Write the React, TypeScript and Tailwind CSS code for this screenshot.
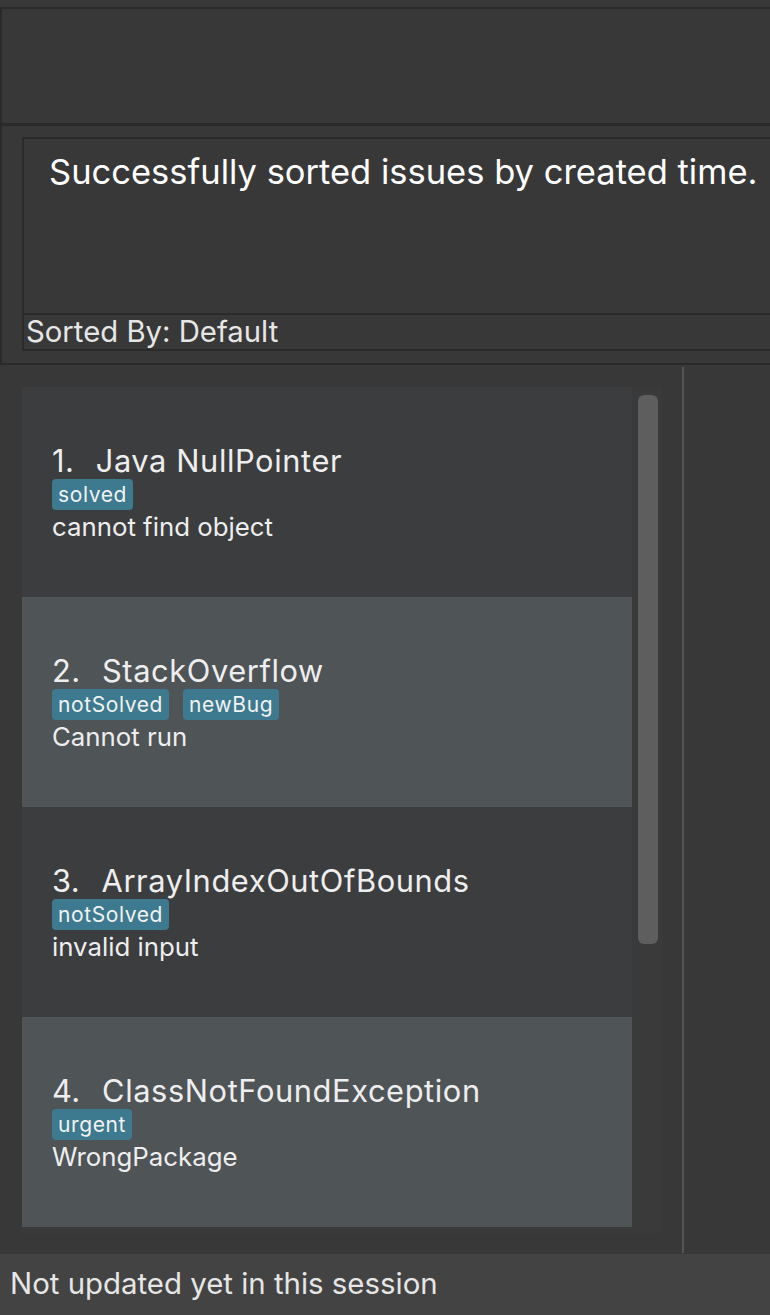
import React from "react";

type Issue = { n: number; title: string; tags: string[]; desc: string };

const issues: Issue[] = [
  { n: 1, title: "Java NullPointer", tags: ["solved"], desc: "cannot find object" },
  { n: 2, title: "StackOverflow", tags: ["notSolved", "newBug"], desc: "Cannot run" },
  { n: 3, title: "ArrayIndexOutOfBounds", tags: ["notSolved"], desc: "invalid input" },
  { n: 4, title: "ClassNotFoundException", tags: ["urgent"], desc: "WrongPackage" },
];

function Card({ issue, even }: { issue: Issue; even: boolean }) {
  return (
    <div
      className={`h-[210px] w-[610px] shrink-0 pl-[30px] pt-[56px] text-[#eeeeee] ${
        even ? "bg-[#4f5457]" : "bg-[#3c3d3f]"
      }`}
    >
      <div className="text-[30.8px] leading-[35px] tracking-[0.5px] whitespace-pre">
        {`${issue.n}.  `}
        <span className="ml-[3px] tracking-[0.6px]">{issue.title}</span>
      </div>
      <div className="mt-[1px] flex gap-[14px]">
        {issue.tags.map((t) => (
          <span
            key={t}
            className="h-[31px] rounded-[4px] bg-[#3d7a8f] px-[6px] text-[21px] leading-[31px] tracking-[0.6px] text-[#f2f2f2]"
          >
            {t}
          </span>
        ))}
      </div>
      <div className="mt-[2px] text-[25.8px] leading-[30px]">{issue.desc}</div>
    </div>
  );
}

export default function App() {
  return (
    <div className="flex h-[1315px] w-[770px] flex-col overflow-hidden bg-[#383838] font-['Inter',sans-serif]">
      <div className="h-[7px] shrink-0" />
      {/* command box */}
      <div className="h-[116px] shrink-0 border-l-2 border-t-2 border-[#2a2a2a]" />
      {/* result display */}
      <div className="h-[240px] shrink-0 border-l-2 border-t-[3px] border-[#2a2a2a] pl-[20px] pt-[11px]">
        <div className="flex h-[214px] flex-col border-2 border-r-0 border-[#2a2a2a]">
          <div className="h-[174px] shrink-0 pl-[25px] pt-[12px] text-[34.5px] leading-[41px] text-white whitespace-nowrap">
            Successfully sorted issues by created time.
          </div>
          <div className="h-[36px] shrink-0 border-t-2 border-[#2a2a2a] pl-[2px] text-[29.3px] leading-[34px] text-[#e6e6e6] whitespace-nowrap">
            Sorted By: Default
          </div>
        </div>
      </div>
      {/* list section */}
      <div className="flex h-[891px] shrink-0 border-t-2 border-[#2a2a2a]">
        <div className="w-[682px] shrink-0 pl-[22px] pt-[22px]">
          <div className="relative flex h-[846px] w-[640px] bg-[#3a3a3a]">
            <div className="flex flex-col">
              {issues.map((it, i) => (
                <Card key={it.n} issue={it} even={i % 2 === 1} />
              ))}
            </div>
            <div className="ml-[6px] mt-[8px] h-[549px] w-[20px] rounded-[6px] bg-[#5e5e5e]" />
          </div>
        </div>
        <div className="mt-[2px] h-[886px] w-[2px] shrink-0 bg-[#555555]" />
        <div className="flex-1" />
      </div>
      {/* status bar */}
      <div className="flex-1 bg-[#434343] pl-[10px] pt-[12px] text-[29.4px] leading-[36px] text-[#e6e6e6] whitespace-nowrap">
        Not updated yet in this session
      </div>
    </div>
  );
}
